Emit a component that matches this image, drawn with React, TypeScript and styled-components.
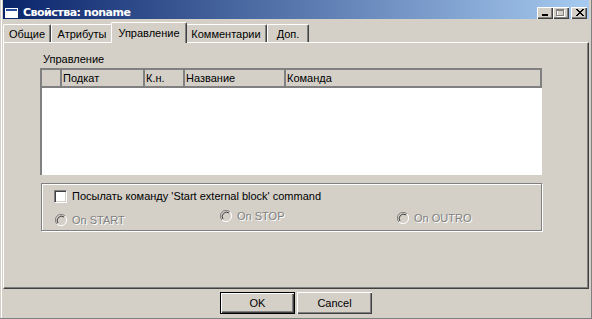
import React from 'react';
import styled, { createGlobalStyle } from 'styled-components';

const GlobalStyle = createGlobalStyle`
  html, body {
    margin: 0;
    padding: 0;
    background: #d4d0c8;
  }
  body {
    font-family: 'Liberation Sans', Arial, sans-serif;
    font-size: 11px;
    color: #000;
  }
`;

const Window = styled.div`
  width: 592px;
  height: 319px;
  box-sizing: border-box;
  padding: 0 3px;
  background: #d4d0c8;
  border-bottom: 1px solid #808080;
  box-shadow: inset 1px 0 0 #d4d0c8, inset 2px 0 0 #fff, inset -1px 0 0 #808080;
  display: flex;
  flex-direction: column;
`;

const TitleBar = styled.div`
  height: 19px;
  display: flex;
  align-items: flex-start;
  padding: 0 2px;
  background: linear-gradient(to right, #0a246a, #a6caf0);
`;

const TitleIcon = styled.svg`
  margin-top: 8px;
  flex-shrink: 0;
`;

const TitleText = styled.div`
  margin: 6px 0 0 5px;
  font-family: 'DejaVu Sans', Verdana, sans-serif;
  font-size: 11px;
  line-height: 13px;
  font-weight: bold;
  letter-spacing: -0.5px;
  color: #fff;
`;

const CaptionButtons = styled.div`
  margin: 7px 0 0 auto;
  display: flex;
`;

const CaptionButton = styled.div<{ $gapLeft?: number }>`
  width: 16px;
  height: 12px;
  box-sizing: border-box;
  margin-left: ${({ $gapLeft }) => $gapLeft ?? 0}px;
  background: #d4d0c8;
  box-shadow: inset 1px 1px 0 #fff, inset -1px -1px 0 #404040, inset -2px -2px 0 #808080;
  display: flex;
  align-items: center;
  justify-content: center;
`;

const TabStrip = styled.div`
  margin-top: 2px;
  height: 21px;
  display: flex;
  align-items: flex-end;
`;

const Tab = styled.div<{ $width: number; $active?: boolean }>`
  position: relative;
  z-index: ${({ $active }) => ($active ? 2 : 1)};
  box-sizing: border-box;
  width: ${({ $width, $active }) => $width + ($active ? 4 : 0)}px;
  height: ${({ $active }) => ($active ? 21 : 18)}px;
  margin: ${({ $active }) => ($active ? '0 -2px -1px -2px' : '0')};
  background: #d4d0c8;
  border-top: 1px solid #fff;
  border-left: 1px solid #fff;
  border-right: 1px solid #404040;
  border-radius: 2px 2px 0 0;
  box-shadow: inset -1px 0 0 #808080;
  display: flex;
  align-items: center;
  justify-content: center;
  white-space: nowrap;
`;

const Panel = styled.div`
  position: relative;
  z-index: 1;
  height: 247px;
  box-sizing: border-box;
  border-top: 1px solid #fff;
  border-left: 1px solid #fff;
  border-right: 1px solid #404040;
  border-bottom: 1px solid #404040;
  box-shadow: inset -1px -1px 0 #808080;
  padding: 10px 0 0 36px;
  display: flex;
  flex-direction: column;
`;

const Caption = styled.div`
  margin-left: 3px;
  height: 13px;
  line-height: 13px;
`;

const Grid = styled.div`
  margin-top: 2px;
  width: 502px;
  height: 107px;
  box-sizing: border-box;
  border-top: 2px solid #808080;
  border-left: 2px solid #808080;
  background: #fff;
  display: flex;
  flex-direction: column;
`;

const GridHeader = styled.div`
  display: grid;
  grid-template-columns: 20px 83px 40px 101px 1fr;
  height: 18px;
`;

const HeaderCell = styled.div`
  box-sizing: border-box;
  background: #d4d0c8;
  border-right: 2px solid #808080;
  border-bottom: 2px solid #808080;
  padding-left: 1px;
  line-height: 16px;
  white-space: nowrap;
  overflow: hidden;
`;

const GroupBox = styled.div`
  margin: 8px 0 0 1px;
  width: 501px;
  height: 48px;
  box-sizing: border-box;
  border: 1px solid #808080;
  box-shadow: inset 1px 1px 0 #fff, 1px 1px 0 #fff;
  padding: 6px 0 0 12px;
`;

const CheckRow = styled.label`
  display: flex;
  align-items: center;
  height: 13px;
`;

const CheckBox = styled.span`
  width: 13px;
  height: 13px;
  box-sizing: border-box;
  border: 1px solid;
  border-color: #808080 #fff #fff #808080;
  box-shadow: inset 1px 1px 0 #404040, inset -1px -1px 0 #d4d0c8;
  background: #fff;
  flex-shrink: 0;
`;

const CheckText = styled.span`
  margin-left: 5px;
  line-height: 13px;
  white-space: nowrap;
`;

const RadioRow = styled.div`
  margin-top: 7px;
  padding-left: 1px;
  display: grid;
  grid-template-columns: 165px 177px auto;
  align-items: start;
`;

const RadioItem = styled.div<{ $offset: number }>`
  margin-top: ${({ $offset }) => $offset}px;
  display: flex;
  align-items: center;
  height: 12px;
`;

const RadioText = styled.span`
  margin-left: 5px;
  color: #808080;
  text-shadow: 1px 1px 0 #fff;
  white-space: nowrap;
`;

const Footer = styled.div`
  height: 29px;
  box-sizing: border-box;
  padding-top: 3px;
  display: flex;
  justify-content: center;
  gap: 2px;
`;

const Button = styled.button<{ $default?: boolean }>`
  width: 75px;
  height: 22px;
  box-sizing: border-box;
  padding: 0;
  font-family: inherit;
  font-size: 11px;
  color: #000;
  background: #d4d0c8;
  border: ${({ $default }) => ($default ? '1px solid #000' : 'none')};
  box-shadow: inset 1px 1px 0 #fff, inset -1px -1px 0 #404040, inset -2px -2px 0 #808080;
`;

function Radio() {
  return (
    <svg width="12" height="12" viewBox="0 0 12 12">
      <circle cx="6" cy="6" r="5" fill="#d4d0c8" />
      <path d="M10 2 A5.5 5.5 0 0 0 2 10" fill="none" stroke="#808080" strokeWidth="1" />
      <path d="M2 10 A5.5 5.5 0 0 0 10 2" fill="none" stroke="#fff" strokeWidth="1" />
      <path d="M9 3 A4.3 4.3 0 0 0 3 9" fill="none" stroke="#404040" strokeWidth="1" />
    </svg>
  );
}

const tabs = [
  { label: 'Общие', width: 48 },
  { label: 'Атрибуты', width: 62 },
  { label: 'Управление', width: 72, active: true },
  { label: 'Комментарии', width: 82 },
  { label: 'Доп.', width: 42 },
];

const columns = ['', 'Подкат', 'К.н.', 'Название', 'Команда'];

const radios = [
  { label: 'On START', offset: 4 },
  { label: 'On STOP', offset: 0 },
  { label: 'On OUTRO', offset: 2 },
];

export default function App() {
  return (
    <>
      <GlobalStyle />
      <Window>
        <TitleBar>
          <TitleIcon width="13" height="10" viewBox="0 0 13 10">
            <rect x="0" y="0" width="13" height="10" fill="#fff" />
            <rect x="1" y="1" width="11" height="2" fill="#2a4ea0" />
          </TitleIcon>
          <TitleText>Свойства: noname</TitleText>
          <CaptionButtons>
            <CaptionButton>
              <svg width="8" height="8" viewBox="0 0 8 8">
                <rect x="1" y="5" width="6" height="2" fill="#000" />
              </svg>
            </CaptionButton>
            <CaptionButton>
              <svg width="10" height="9" viewBox="0 0 10 9">
                <rect x="1.5" y="1.5" width="7" height="6" fill="none" stroke="#fff" />
                <rect x="0.5" y="0.5" width="7" height="6" fill="none" stroke="#808080" />
                <rect x="0" y="0" width="8" height="2" fill="#808080" />
              </svg>
            </CaptionButton>
            <CaptionButton $gapLeft={2}>
              <svg width="9" height="8" viewBox="0 0 9 8">
                <path d="M1 0 L8 7 M2 0 L9 7 M8 0 L1 7 M9 0 L2 7" stroke="#000" strokeWidth="1" />
              </svg>
            </CaptionButton>
          </CaptionButtons>
        </TitleBar>

        <TabStrip>
          {tabs.map((t) => (
            <Tab key={t.label} $width={t.width} $active={t.active}>
              {t.label}
            </Tab>
          ))}
        </TabStrip>

        <Panel>
          <Caption>Управление</Caption>
          <Grid>
            <GridHeader>
              {columns.map((c, i) => (
                <HeaderCell key={i}>{c}</HeaderCell>
              ))}
            </GridHeader>
          </Grid>
          <GroupBox>
            <CheckRow>
              <CheckBox />
              <CheckText>Посылать команду 'Start external block' command</CheckText>
            </CheckRow>
            <RadioRow>
              {radios.map((r) => (
                <RadioItem key={r.label} $offset={r.offset}>
                  <Radio />
                  <RadioText>{r.label}</RadioText>
                </RadioItem>
              ))}
            </RadioRow>
          </GroupBox>
        </Panel>

        <Footer>
          <Button $default>OK</Button>
          <Button>Cancel</Button>
        </Footer>
      </Window>
    </>
  );
}
